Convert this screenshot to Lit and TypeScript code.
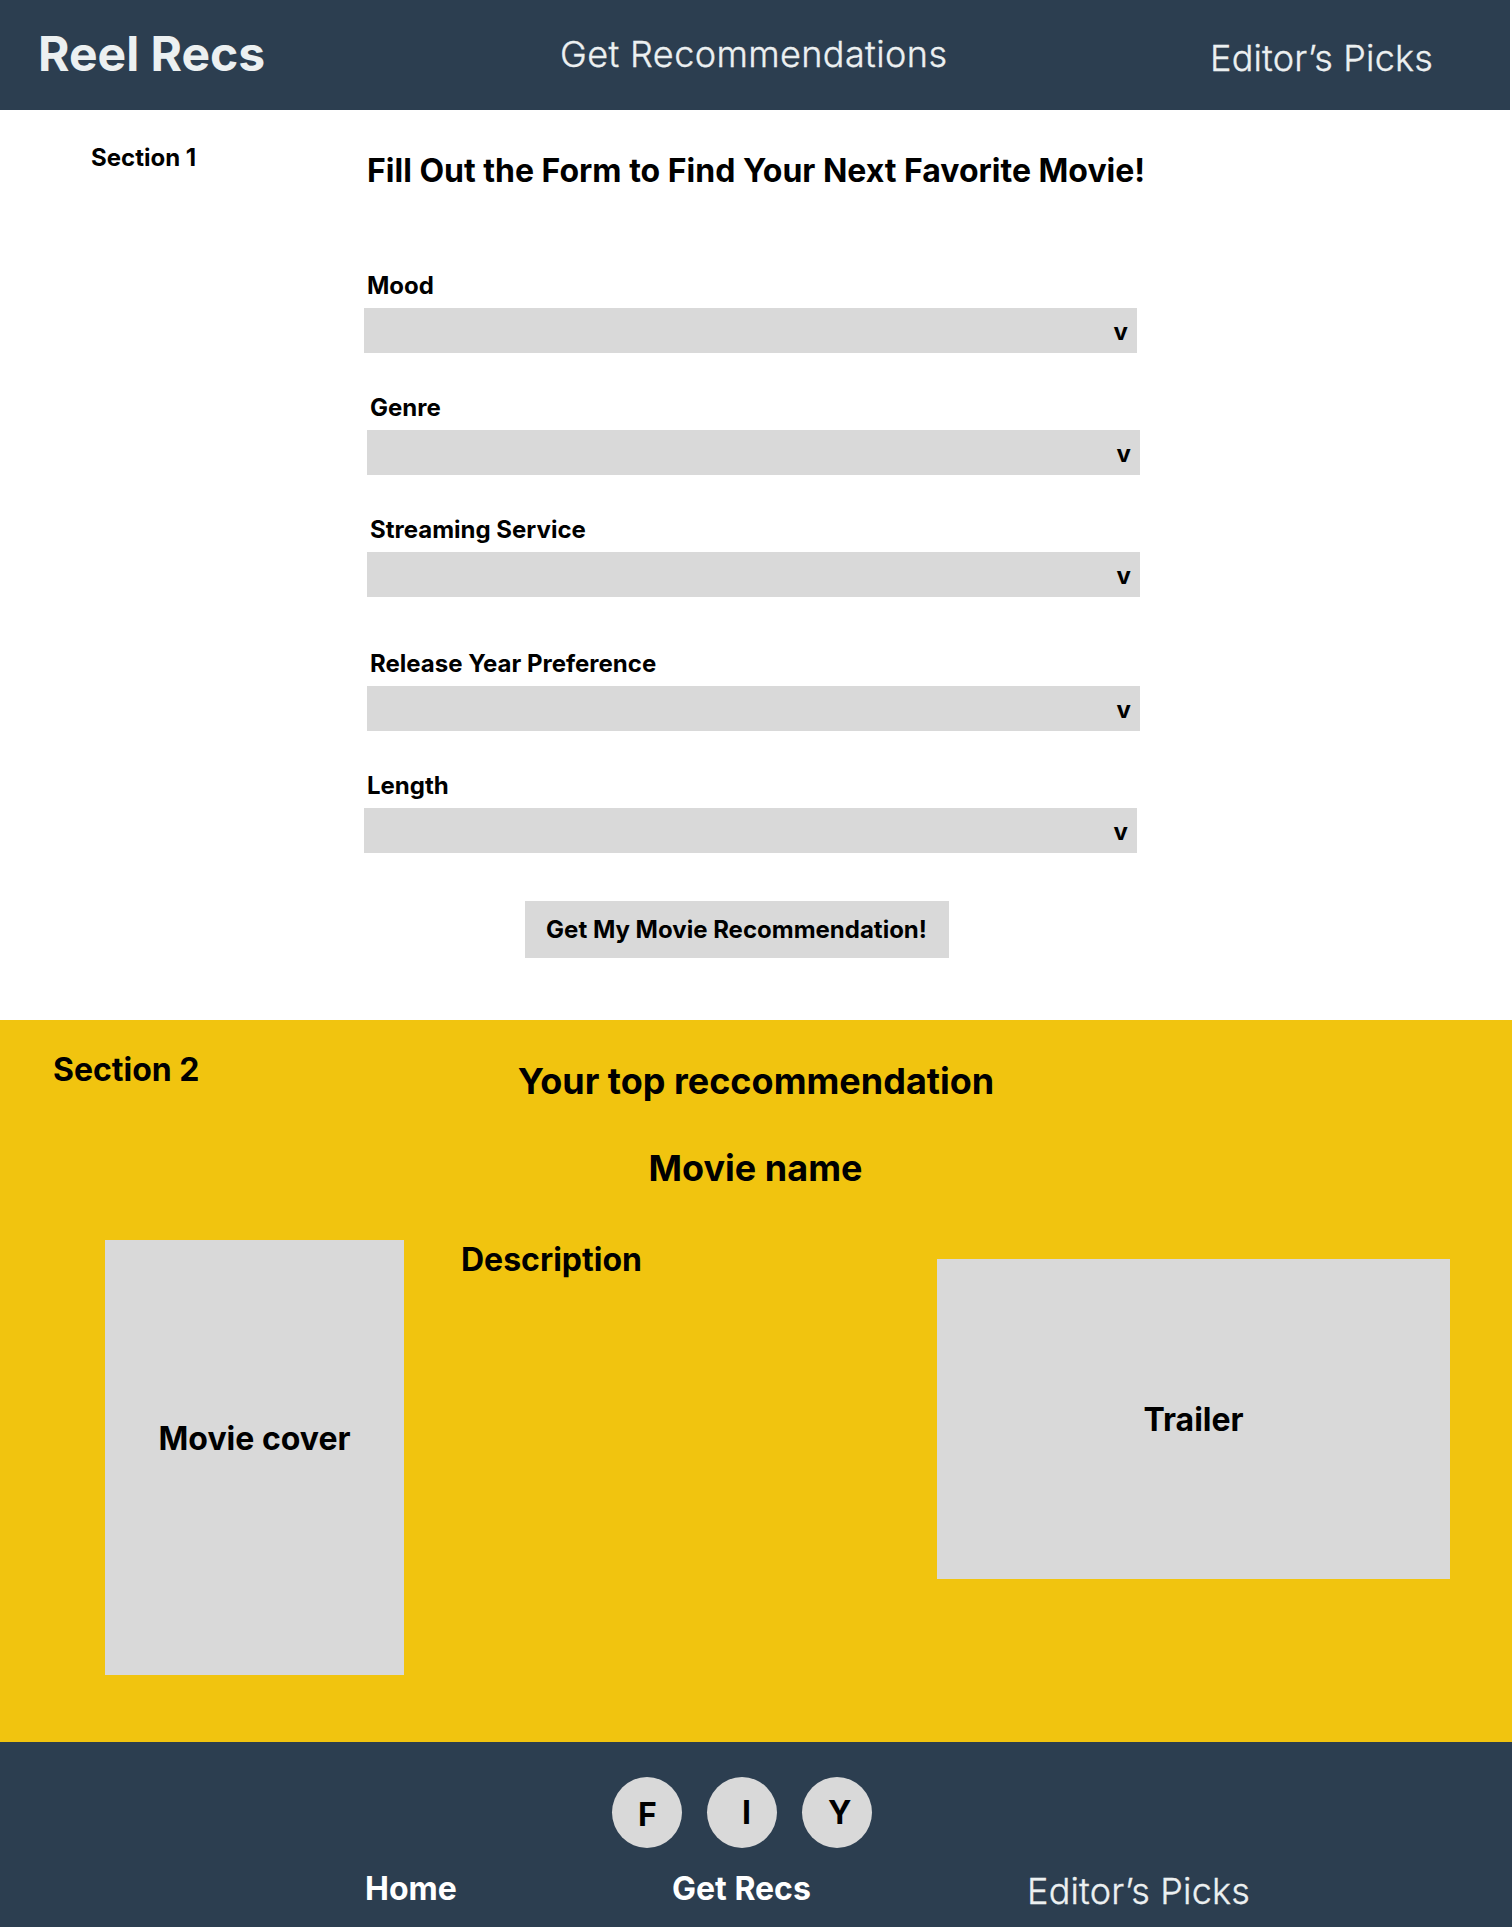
import { LitElement, html, css } from "lit";
import { customElement, property } from "lit/decorators.js";

const base = css`
  :host {
    display: block;
    box-sizing: border-box;
    font-family: Inter, "Liberation Sans", sans-serif;
  }
  h1,
  h2,
  h3,
  p {
    margin: 0;
    font: inherit;
  }
`;

@customElement("site-header")
class SiteHeader extends LitElement {
  static styles = [
    base,
    css`
      .bar {
        display: grid;
        grid-template-columns: 560px 650px 1fr;
        align-items: start;
        box-sizing: border-box;
        width: 1510px;
        height: 110px;
        background: #2c3e50;
        color: #ecf0f1;
        white-space: nowrap;
      }
      .brand {
        margin: 25px 0 0 38px;
        font-size: 48px;
        font-weight: 700;
        line-height: 58px;
      }
      .link {
        margin-top: 32px;
        font-size: 36px;
        font-weight: 300;
        letter-spacing: 0.4px;
        line-height: 44px;
        -webkit-text-stroke: 0.35px currentColor;
      }
      .picks {
        margin-top: 36px;
        letter-spacing: 0.2px;
      }
    `,
  ];
  render() {
    return html`<nav class="bar">
      <h1 class="brand">Reel Recs</h1>
      <span class="link">Get Recommendations</span>
      <span class="link picks">Editor’s Picks</span>
    </nav>`;
  }
}

@customElement("select-field")
class SelectField extends LitElement {
  @property() label = "";
  static styles = [
    base,
    css`
      :host {
        width: 773px;
        font-size: 24px;
        font-weight: 700;
        line-height: 29px;
      }
      .label {
        display: block;
        padding-left: 3px;
      }
      .box {
        display: flex;
        justify-content: flex-end;
        box-sizing: border-box;
        height: 45px;
        margin-top: 8px;
        padding: 9px 9px 0 0;
        background: #d9d9d9;
      }
    `,
  ];
  render() {
    return html`<span class="label">${this.label}</span>
      <div class="box"><span>v</span></div>`;
  }
}

@customElement("recommend-form")
class RecommendForm extends LitElement {
  static styles = [
    base,
    css`
      :host {
        display: grid;
        grid-template-columns: 364px 1fr;
        height: 910px;
        background: #fff;
        color: #000;
        font-weight: 700;
      }
      .tag {
        margin: 33px 0 0 91px;
        font-size: 24px;
        line-height: 29px;
      }
      .form {
        display: flex;
        flex-direction: column;
        align-items: flex-start;
        padding-top: 41px;
      }
      .title {
        margin: 0 0 81px 3px;
        font-size: 32px;
        line-height: 39px;
        white-space: nowrap;
      }
      .fields {
        display: flex;
        flex-direction: column;
        gap: 40px;
      }
      .inset {
        margin-left: 3px;
      }
      .spaced {
        margin-top: 12px;
      }
      .submit {
        margin: 48px 0 0 161px;
        width: 424px;
        height: 57px;
        padding: 0 1px 1px 0;
        border: 0;
        background: #d9d9d9;
        color: #000;
        font: 700 24px/29px Inter, "Liberation Sans", sans-serif;
      }
    `,
  ];
  render() {
    return html`<p class="tag">Section 1</p>
      <div class="form">
        <h2 class="title">Fill Out the Form to Find Your Next Favorite Movie!</h2>
        <div class="fields">
          <select-field label="Mood"></select-field>
          <select-field class="inset" label="Genre"></select-field>
          <select-field class="inset" label="Streaming Service"></select-field>
          <select-field class="inset spaced" label="Release Year Preference"></select-field>
          <select-field label="Length"></select-field>
        </div>
        <button class="submit">Get My Movie Recommendation!</button>
      </div>`;
  }
}

@customElement("top-recommendation")
class TopRecommendation extends LitElement {
  static styles = [
    base,
    css`
      :host {
        display: flex;
        flex-direction: column;
        height: 722px;
        background: #f1c40f;
        color: #000;
        font-size: 32px;
        font-weight: 700;
        line-height: 39px;
      }
      .head {
        display: grid;
        grid-template-columns: 463px 586px 463px;
        height: 126px;
      }
      .tag {
        margin: 30px 0 0 53px;
      }
      .title {
        margin-top: 39px;
      }
      .title,
      .name {
        font-size: 36px;
        line-height: 44px;
        text-align: center;
      }
      .name {
        padding-right: 1px;
      }
      .body {
        display: grid;
        grid-template-columns: 299px 1fr 513px;
        align-items: start;
        padding: 50px 62px 0 105px;
      }
      .cover,
      .trailer {
        display: flex;
        justify-content: center;
        background: #d9d9d9;
      }
      .cover {
        box-sizing: border-box;
        height: 435px;
        padding-top: 179px;
      }
      .desc {
        padding-left: 57px;
      }
      .trailer {
        align-items: center;
        height: 320px;
        margin-top: 19px;
      }
    `,
  ];
  render() {
    return html`<div class="head">
        <p class="tag">Section 2</p>
        <h2 class="title">Your top reccommendation</h2>
      </div>
      <h3 class="name">Movie name</h3>
      <div class="body">
        <div class="cover">Movie cover</div>
        <p class="desc">Description</p>
        <div class="trailer">Trailer</div>
      </div>`;
  }
}

@customElement("site-footer")
class SiteFooter extends LitElement {
  static styles = [
    base,
    css`
      :host {
        height: 185px;
        padding-top: 35px;
        background: #2c3e50;
        color: #fff;
        font-size: 32px;
        font-weight: 700;
        line-height: 39px;
        white-space: nowrap;
      }
      .social {
        display: flex;
        gap: 25px;
        padding-left: 612px;
      }
      .dot {
        box-sizing: border-box;
        width: 70px;
        height: 71px;
        padding-top: 16px;
        border-radius: 50%;
        background: #d9d9d9;
        color: #000;
      }
      .f {
        padding: 18px 0 0 26px;
      }
      .i {
        padding-left: 35px;
      }
      .y {
        padding-left: 26px;
      }
      .links {
        display: grid;
        grid-template-columns: 307px 355px 1fr;
        padding: 21px 0 0 365px;
      }
      .picks {
        color: #ecf0f1;
        font-size: 36px;
        font-weight: 300;
        letter-spacing: 0.2px;
        line-height: 44px;
        -webkit-text-stroke: 0.35px currentColor;
      }
    `,
  ];
  render() {
    return html`<div class="social">
        <div class="dot f">F</div>
        <div class="dot i">I</div>
        <div class="dot y">Y</div>
      </div>
      <nav class="links">
        <span>Home</span>
        <span>Get Recs</span>
        <span class="picks">Editor’s Picks</span>
      </nav>`;
  }
}

@customElement("app-root")
class AppRoot extends LitElement {
  static styles = [
    base,
    css`
      :host {
        width: 1512px;
        height: 1927px;
        overflow: hidden;
        background: #fff;
      }
    `,
  ];
  render() {
    return html`<site-header></site-header>
      <recommend-form></recommend-form>
      <top-recommendation></top-recommendation>
      <site-footer></site-footer>`;
  }
}
